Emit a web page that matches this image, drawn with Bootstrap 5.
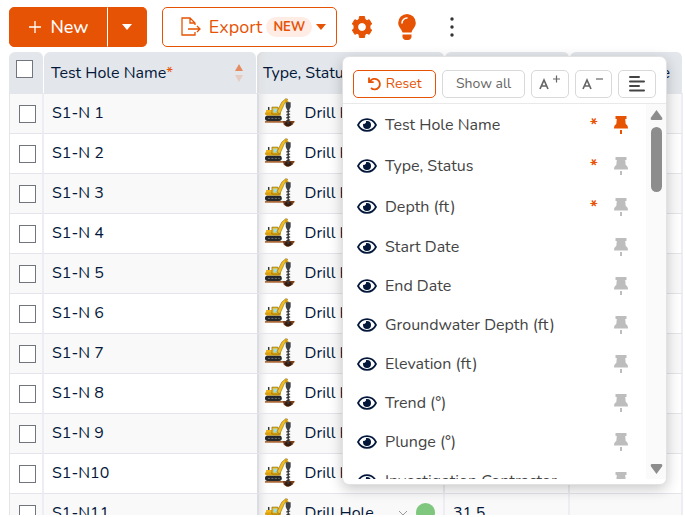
<!DOCTYPE html>
<html lang="en">
<head>
<meta charset="utf-8">
<meta name="viewport" content="width=device-width, initial-scale=1">
<title>Test Holes</title>
<link href="https://cdn.jsdelivr.net/npm/bootstrap@5.3.0/dist/css/bootstrap.min.css" rel="stylesheet">
<style>
:root{--brand:#e65305;--navy:#03173a;--line:#e4e5ea}
body{font-family:Nunito,Lato,"Open Sans",sans-serif;font-size:16px;line-height:24px;color:var(--navy);background:#fff}
.shell{height:100vh;padding:7px 2px 2px 9px;overflow:hidden}
.toolbar{height:40px;gap:15px}
.toolbar .btn{height:40px;font-size:18px;line-height:24px;border-radius:5px}
.btn-brand{--bs-btn-bg:var(--brand);--bs-btn-color:#fff;--bs-btn-hover-bg:#cc4a04;--bs-btn-hover-color:#fff;--bs-btn-border-color:var(--brand)}
.btn-line{--bs-btn-color:var(--brand);--bs-btn-border-color:var(--brand);--bs-btn-bg:#fff;--bs-btn-hover-color:var(--brand);--bs-btn-hover-border-color:var(--brand)}
.toolbar .new-main{width:99px;font-weight:500}
.new-more{width:40px;border-left:1px solid #fff!important}
.export{width:175px}
.tag-new{background:#ffece5;color:var(--brand);font-size:13px;line-height:20px;font-weight:700;padding:0 7px;border-radius:10px}
.tool{border:0;background:none;padding:0;line-height:0;color:var(--brand)}
.tools{gap:25px;margin-left:-1px}
.frame{margin-top:5px;height:calc(100vh - 54px);overflow:hidden}
.holes{table-layout:fixed;width:100%;border-collapse:separate;border-spacing:0}
.holes th{height:41px;background:#e3e7eb;font-weight:400;padding:0 7px;border-right:1px solid #fff;border-radius:6px 6px 0 0;white-space:nowrap;overflow:hidden}
.holes th.last{padding-right:12px}
.holes td{height:40px;padding:0 8px 2px;border-top:1px solid var(--line);border-right:2px solid #ededf3;white-space:nowrap;overflow:hidden}
.holes tr:nth-child(odd) td{background:#f9f9f9}
.holes td:first-child{border-left:1px solid var(--line);padding:1px 0 0 9px}
.holes .c-pin{border-right:0}
.holes .c-type{padding-left:8px;box-shadow:inset 2px 0 #dcdde2,inset 14px 0 10px -10px #dfdfdf}
.holes th.c-type{padding-left:6px}
.c-check{width:35px}.c-pin{width:213px}.c-kind{width:188px}.c-depth{width:125px}
.holes .form-check-input{width:17px;height:18px;margin:0;border:1px solid #70757e;border-radius:0;background-color:#fff;display:block}
.sorter{line-height:0;margin-right:6px}
.star{color:var(--brand)}
.dot{width:19px;height:19px;border-radius:50%;background:#7fc77f}
.kind-name{width:105px;padding-left:10px}
.picker{position:absolute;left:342px;top:56px;width:325px;background:#fff;border:1px solid #e2e2e5;border-radius:7px;box-shadow:0 4px 14px rgba(0,0,0,.22);padding-bottom:5px;color:#444}
.picker-head{height:47px;padding:7px 10px 0;gap:6px;border-bottom:1px solid #e9e9e9}
.picker-head .btn{height:28px;padding:0;font-size:14px;line-height:20px;border-radius:5px}
.btn-quiet{--bs-btn-color:#666;--bs-btn-border-color:#d9d9d9;--bs-btn-bg:#fff}
.b-reset{width:84px}.b-all{width:83px}.b-small{width:38px}
.picker-body{height:375px}
.fields{overflow:hidden}
.field{height:39px;padding:0 18px 0 14px;flex:none}
.field.req{height:41px}
.field .star{font-size:18px}
.field button{border:0;background:none;padding:0;line-height:0;color:var(--navy)}
.field .pin{color:#bdbdbd}
.field .pin.on{color:var(--brand)}
.scroller{width:20px;background:#fafafa;padding:6px 0 5px}
.thumb{width:11px;height:65px;border-radius:6px;background:#8d8d8d;margin-top:7px}
</style>
<script src="https://cdn.jsdelivr.net/npm/bootstrap@5.3.0/dist/js/bootstrap.bundle.min.js"></script>
</head>
<body>
<svg class="d-none" xmlns="http://www.w3.org/2000/svg">
<symbol id="drill" viewBox="0 0 30 30">
<path d="M0 23h30v2H0z" fill="#a9683a"/><path d="M18 23h12l-2 4-4 2h-2l-3-2z" fill="#7a3f18"/><ellipse cx="23.500" cy="26" rx="3.500" ry="2.500" fill="#341d12"/>
<rect x="0" y="17.500" width="17" height="5.500" rx="2.700" fill="#25282b"/><path d="M3 20.500h12" stroke="#70757a" stroke-dasharray="2 1.500"/>
<path d="M1 12h6v5H1z" fill="#efb71b"/><path d="M0 14.500h16v3H2l-2-1z" fill="#dca10c"/><path d="M3 12V9h1.500v3z" fill="#333"/>
<path d="M7 9h6l2 6v1H7z" fill="#efb71b" stroke="#7f6110" stroke-width=".6"/><path d="M8.500 10.500h3.500l1 4H8.500z" fill="#9adbe8"/>
<path d="M12 14l5-10L21 .5l2 .5-3.500 5-4.500 10z" fill="#f2bd20" stroke="#8a6a12" stroke-width=".6"/><path d="M21 .5l4 4-2 1-3-3z" fill="#d89b0c"/>
<path d="M21 4h5v5l-1.500 3h-2L21 9z" fill="#3d4146"/><path d="M23.500 11v15" stroke="#3c3c3f" stroke-width="1.500"/><path d="M21.500 14l4-1m-4 4l4-1m-4 4l4-1m-4 4l4-1" stroke="#303033" stroke-width="1.200"/>
</symbol>
<symbol id="eye" viewBox="0 0 20 14"><path d="M1 7C5-.9 15-.9 19 7 15 14.900 5 14.900 1 7z" fill="none" stroke="currentColor" stroke-width="1.700"/><path d="M10 3a4 4 0 1 1-4 4c0-.5.1-.9.2-1.200A2.200 2.200 0 0 0 9 3.200c.3-.1.600-.2 1-.2z" fill="currentColor"/></symbol>
<symbol id="pin" viewBox="0 0 14 18"><path d="M1.500 0h11v3h-1.300l.5 5c1.300.8 2.300 2 2.300 4.500H0c0-2.500 1-3.700 2.300-4.500l.5-5H1.500zM6 14h2v4H6z" fill="currentColor"/></symbol>
</svg>
<main class="shell">
<div class="toolbar d-flex align-items-center">
<div class="btn-group" role="group" aria-label="New">
<button type="button" class="btn btn-brand new-main d-flex align-items-center justify-content-center p-0 gap-1"><svg class="me-1" width="14" height="14" viewBox="0 0 14 14"><path d="M7 1v12M1 7h12" stroke="#fff" stroke-width="1.300"/></svg>New</button>
<button type="button" class="btn btn-brand new-more p-0" aria-label="More new options"><svg class="d-block mx-auto" width="10" height="6"><path d="M0 0h10L5 6z" fill="#fff"/></svg></button>
</div>
<button type="button" class="btn btn-line export d-flex align-items-center justify-content-center p-0 ps-2"><svg class="me-1" width="20" height="20" viewBox="0 0 20 20"><path d="M14 8V6L9 1H1v17h13v-3M9 1v5h5M7 12h12m-3-3 3 3-3 3" fill="none" stroke="currentColor" stroke-width="1.300"/></svg><span class="mx-1">Export</span><span class="tag-new">NEW</span><svg class="ms-1" width="10" height="6"><path d="M0 0h10L5 6z" fill="currentColor"/></svg></button>
<div class="tools d-flex align-items-center">
<button type="button" class="tool" aria-label="Settings"><svg width="22" height="24" viewBox="0 0 22 24"><g fill="currentColor" stroke="currentColor" stroke-linejoin="round"><path d="M8.500 1.500h5l.7 5h-6.400zM8.500 22.500h5l.7-5h-6.400zM1.300 9l2.500-4.300 4.700 1.900-3.300 5.600zM1.300 15l2.500 4.300 4.700-1.900-3.300-5.600zM20.700 9l-2.500-4.300-4.700 1.900 3.300 5.600zM20.700 15l-2.500 4.300-4.700-1.900 3.300-5.600z"/></g><circle cx="11" cy="12" r="6" fill="none" stroke="currentColor" stroke-width="5"/><circle cx="11" cy="12" r="3.700" fill="#fff"/></svg></button>
<button type="button" class="tool" aria-label="Tips"><svg width="18" height="26" viewBox="0 0 18 26"><path d="M9 0a8.800 8.800 0 0 1 8.800 8.800c0 4.200-3 5.600-4.300 9.700h-9C3.200 14.400.2 13 .2 8.800A8.800 8.800 0 0 1 9 0zM4.500 20.500h9V22a3.500 3.500 0 0 1-3.500 4H8a3.500 3.500 0 0 1-3.500-4z" fill="currentColor"/><path d="M4 9a5 5 0 0 1 5-5" fill="none" stroke="#fff" stroke-width="1.500" stroke-linecap="round"/></svg></button>
<button type="button" class="tool ms-2" aria-label="More"><svg width="6" height="22"><g fill="#333"><circle cx="3" cy="3" r="1.700"/><circle cx="3" cy="11" r="1.700"/><circle cx="3" cy="19" r="1.700"/></g></svg></button>
</div>
</div>
<div class="frame">
<table class="holes">
<colgroup><col class="c-check"><col class="c-pin"><col class="c-kind"><col class="c-depth"><col></colgroup>
<thead><tr>
<th><input class="form-check-input mb-2" type="checkbox" aria-label="Select all"></th>
<th><div class="d-flex align-items-center justify-content-between"><span>Test Hole Name<span class="star">*</span></span><span class="sorter"><svg width="8" height="18"><path d="M4 0l4 7H0z" fill="#e58b62"/><path d="M4 18l4-7H0z" fill="#e6cbc3"/></svg></span></div></th>
<th class="c-type">Type, Status</th><th>Depth (ft)</th><th class="last text-end">Start Date</th>
</tr></thead>
<tbody id="rows"></tbody>
</table>
</div>
</main>
<section class="picker" aria-label="Columns">
<div class="picker-head d-flex align-items-center">
<button type="button" class="btn btn-line b-reset d-flex align-items-center justify-content-center gap-1"><svg width="14" height="14" viewBox="0 0 14 14"><path d="M2 4.500A5.300 5.300 0 1 1 3 11M1 .5v4.700h4.700" fill="none" stroke="currentColor" stroke-width="1.800"/></svg>Reset</button>
<button type="button" class="btn btn-quiet b-all">Show all</button>
<button type="button" class="btn btn-quiet b-small" aria-label="Larger text"><svg width="24" height="20" viewBox="0 0 24 20" fill="none" stroke="#666"><path d="M2 15l4-9 4 9M3.500 12h5" stroke-width="1.700"/><path d="M15 5h7M18.500 1.500v7" stroke-width="1.200"/></svg></button>
<button type="button" class="btn btn-quiet b-small" aria-label="Smaller text"><svg width="24" height="20" viewBox="0 0 24 20" fill="none" stroke="#666"><path d="M2 15l4-9 4 9M3.500 12h5" stroke-width="1.700"/><path d="M15 5h7" stroke-width="1.200"/></svg></button>
<button type="button" class="btn btn-quiet b-small d-flex align-items-center justify-content-center" aria-label="Align left"><svg width="16" height="16" viewBox="0 0 16 16"><path d="M1 1h9M1 5.500h14M1 10h9M1 14.500h14" stroke="#444" stroke-width="2" stroke-linecap="round"/></svg></button>
</div>
<div class="picker-body d-flex">
<div class="fields flex-grow-1 d-flex flex-column" id="fields"></div>
<div class="scroller d-flex flex-column align-items-center"><svg width="13" height="10"><path d="M6.500 0 12 7.500Q13 10 11 10H2Q0 10 1 7.500z" fill="#8d8d8d"/></svg><div class="thumb"></div><svg class="mt-auto" width="13" height="10"><path d="M6.500 10 12 2.500Q13 0 11 0H2Q0 0 1 2.500z" fill="#8d8d8d"/></svg></div>
</div>
</section>
<script>
const holes=['S1-N 1','S1-N 2','S1-N 3','S1-N 4','S1-N 5','S1-N 6','S1-N 7','S1-N 8','S1-N 9','S1-N10','S1-N11'];
document.getElementById('rows').innerHTML=holes.map(n=>`<tr><td><input class="form-check-input" type="checkbox" aria-label="Select ${n}"></td><td class="c-pin">${n}</td><td class="c-type"><div class="d-flex align-items-center"><svg width="30" height="30"><use href="#drill"/></svg><span class="kind-name">Drill Hole</span><svg class="me-2" width="10" height="6"><path d="M1 1l4 4 4-4" fill="none" stroke="#999"/></svg><span class="dot"></span></div></td><td>31.5</td><td></td></tr>`).join('');
const fields=['Test Hole Name','Type, Status','Depth (ft)','Start Date','End Date','Groundwater Depth (ft)','Elevation (ft)','Trend (°)','Plunge (°)','Investigation Contractor'];
document.getElementById('fields').innerHTML=fields.map((f,i)=>`<div class="field d-flex align-items-center ${i<3?'req':''}"><button type="button" aria-label="Toggle ${f}"><svg width="20" height="14"><use href="#eye"/></svg></button><span class="ms-2 flex-grow-1">${f}</span>${i<3?'<span class="star fw-bold me-3">*</span>':''}<button type="button" class="pin ${i?'':'on'}" aria-label="Pin ${f}"><svg width="14" height="18"><use href="#pin"/></svg></button></div>`).join('');
</script>
</body>
</html>
